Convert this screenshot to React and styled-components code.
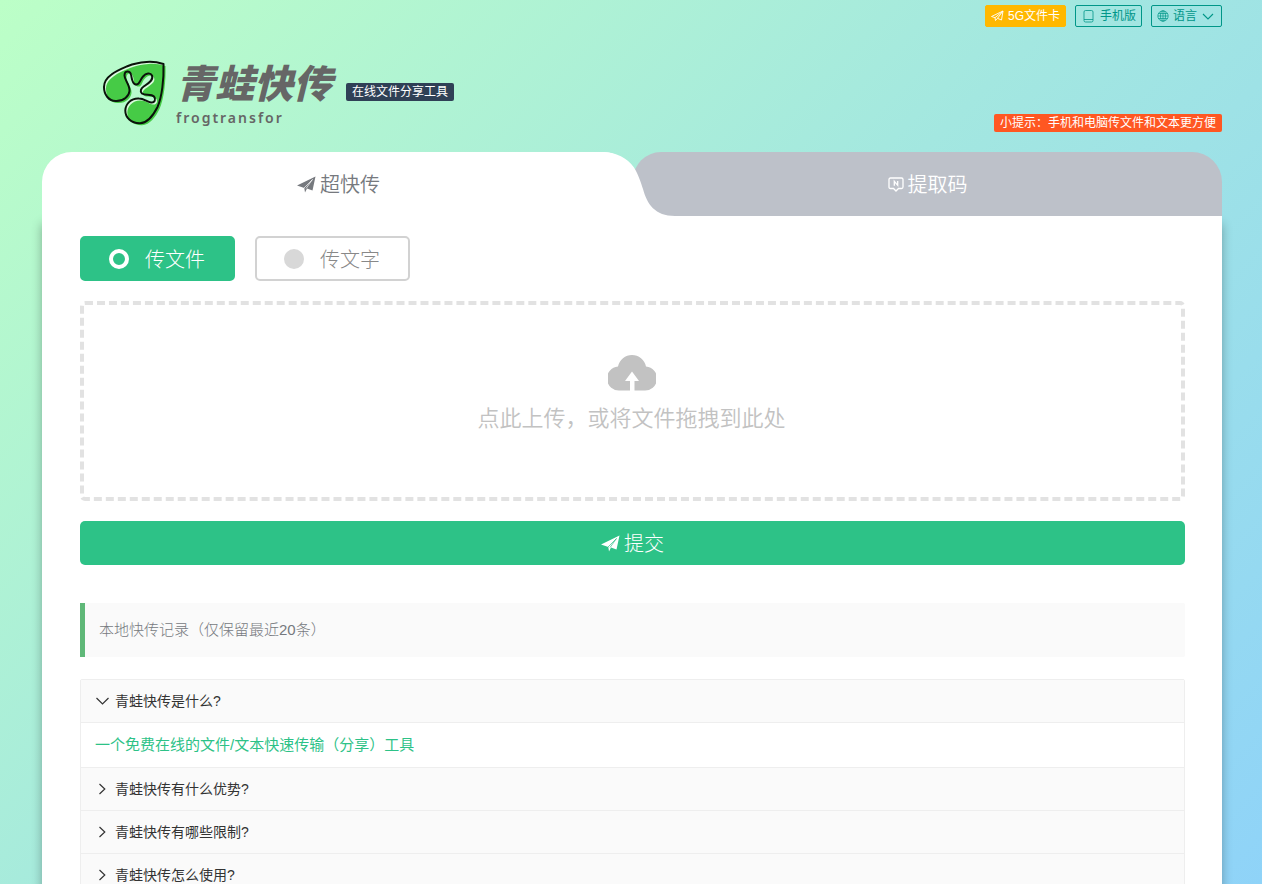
import { useState } from 'react';
import styled, { createGlobalStyle } from 'styled-components';

const GlobalStyle = createGlobalStyle`
  * {
    box-sizing: border-box;
  }

  body {
    margin: 0;
    min-height: 100vh;
    font-family: 'Liberation Sans', 'Noto Sans CJK SC', sans-serif;
    font-size: 14px;
    color: #333;
    background: linear-gradient(135deg, #bcffc7 0%, #a3e7e0 50%, #8fd3f8 100%) fixed;
  }

  button {
    font-family: inherit;
    cursor: pointer;
  }
`;

const StyledPage = styled.div`
  max-width: 1262px;
  margin: 0 auto;
  padding: 0 40px 0 42px;
`;

const StyledTopBar = styled.nav`
  display: flex;
  justify-content: flex-end;
  gap: 9px;
  padding-top: 5px;
`;

const StyledTopLink = styled.a`
  display: inline-flex;
  align-items: center;
  gap: 4px;
  height: 22px;
  padding: 0 5px;
  border: 1px solid ${({ $filled }) => ($filled ? '#ffb800' : '#009688')};
  border-radius: 2px;
  font-size: 12px;
  line-height: 20px;
  text-decoration: none;
  white-space: nowrap;
  color: ${({ $filled }) => ($filled ? '#fff' : '#009688')};
  background: ${({ $filled }) => ($filled ? '#ffb800' : 'transparent')};
`;

const StyledHeader = styled.header`
  display: flex;
  align-items: flex-start;
  justify-content: space-between;
  height: 125px;
  padding: 31px 0 20px 60px;
`;

const StyledBrand = styled.div`
  display: flex;
  gap: 14px;
`;

const StyledLogo = styled.a`
  display: flex;
  gap: 9px;
  color: #666;
  text-decoration: none;
`;

const StyledLogoText = styled.div`
  display: flex;
  flex-direction: column;
  gap: 4px;

  strong {
    font-family: 'Noto Sans CJK SC', sans-serif;
    font-size: 39px;
    font-weight: 900;
    font-style: italic;
    line-height: 46px;
  }

  span {
    font-family: 'Noto Sans', sans-serif;
    font-size: 14px;
    font-weight: 600;
    letter-spacing: 2px;
    line-height: 20px;
  }
`;

const StyledBadge = styled.span`
  height: 18px;
  padding: 0 6px;
  border-radius: 2px;
  font-size: 12px;
  line-height: 18px;
  white-space: nowrap;
  color: #fff;
  background: ${({ $color }) => $color};
`;

const StyledSlogan = styled.div`
  display: flex;
  padding-top: 25px;
`;

const StyledTip = styled.div`
  display: flex;
  align-self: flex-end;
`;

const StyledTabs = styled.div`
  position: relative;
  z-index: 1;
  display: flex;
`;

const StyledTab = styled.button`
  position: relative;
  flex: 1;
  display: flex;
  align-items: center;
  justify-content: center;
  gap: 4px;
  height: 64px;
  padding: 0 0 2px;
  border: 0;
  border-radius: 28px 30px 0 0;
  font-size: 20px;
  font-weight: 350;
  color: #fff;
  background: #bdc1c9;

  &.active {
    z-index: 1;
    padding-left: 2px;
    border-radius: 30px 30px 0 0;
    color: #76797e;
    background: #fff;
  }

  &.active::after {
    content: '';
    position: absolute;
    top: 0;
    right: -42px;
    width: 82px;
    height: 64px;
    background: #fff;
    clip-path: path('M0 0H8C24 0 34 6 41 15.5C46 24 48 31 50 37C54 52 62 64 82 64H0Z');
  }
`;

const StyledPanel = styled.main`
  padding: 20px 37px 40px 38px;
  background: #fff;
  box-shadow: 0 8px 10px rgba(0, 0, 0, 0.3);
`;

const StyledModes = styled.div`
  display: flex;
  gap: 20px;
`;

const StyledMode = styled.label`
  display: flex;
  align-items: center;
  gap: 16px;
  width: 155px;
  height: 45px;
  padding-left: 27px;
  border: 2px solid #d2d2d2;
  border-radius: 5px;
  font-size: 20px;
  font-weight: 300;
  color: #888;
  cursor: pointer;

  input {
    appearance: none;
    width: 20px;
    height: 20px;
    margin: 0;
    border-radius: 50%;
    background: #d8d8d8;
  }

  &.active {
    border-color: #2dc287;
    color: #fff;
    background: #2dc287;
  }

  &.active input {
    border: 4px solid #fff;
    background: transparent;
  }
`;

const StyledUpload = styled.button`
  display: flex;
  flex-direction: column;
  align-items: center;
  gap: 11px;
  width: 100%;
  height: 200px;
  margin-top: 20px;
  padding: 49px 2px 0 0;
  border: 4px dashed #e2e2e2;
  border-radius: 5px;
  font-size: 22px;
  font-weight: 350;
  line-height: 34px;
  color: #c2c2c2;
  background: transparent;
`;

const StyledSubmit = styled.button`
  display: flex;
  align-items: center;
  justify-content: center;
  gap: 4px;
  width: 100%;
  height: 44px;
  margin-top: 20px;
  padding: 0 0 2px;
  border: 0;
  border-radius: 5px;
  font-size: 20px;
  font-weight: 300;
  color: #fff;
  background: #2dc287;
`;

const StyledRecord = styled.p`
  margin: 38px 0 22px;
  padding: 15px 14px;
  border-left: 5px solid #5fb878;
  border-radius: 0 2px 2px 0;
  font-size: 15px;
  font-weight: 300;
  line-height: 24px;
  color: #76797e;
  background: #fafafa;
`;

const StyledFaq = styled.section`
  border: 1px solid #eee;
  border-radius: 2px;
`;

const StyledQuestion = styled.button`
  display: flex;
  align-items: center;
  gap: 6px;
  width: 100%;
  height: 42px;
  padding: 0 14px 2px;
  border: 0;
  font-size: 14px;
  color: #333;
  background: #fafafa;
`;

const StyledFaqItem = styled.div`
  & + & {
    border-top: 1px solid #eee;
  }

  p {
    margin: 0;
    padding: 10px 14px;
    border-top: 1px solid #eee;
    font-size: 15px;
    line-height: 24px;
    color: #2dc287;
  }
`;

const frogPath =
  'M61.5 6C55 4 50 3.500 44.500 4C38 4.500 32 5.500 26 8C19 11 14 13 9.500 16.500C4 20.500 2 24 2 29C2 37 7 43 13.500 43C22 43.500 27 38 27.500 33C28 27 22.500 22 22.500 17.500C22.500 12 28 12.500 29 16.500C30 20 29.500 25 33.500 26.500C38 27.500 37.500 22 41 18.500C44 15 48.500 14.500 50 17.500C52 22 46 25.500 42 28.300C39 30.500 37.500 33 40 35.500C43 38 49 35.500 52 38.500C54.500 41.500 52.500 45 49 44.500C45 44 42 40.500 37 40.500C29 40 23.500 46 23.300 52.500C23.300 59.500 29 65.500 38 65.300C46 65 51.500 57 55.500 49C60 39 62 21 61.500 6Z';

const FrogLogo = () => (
  <svg width="65" height="69" viewBox="0 0 65 69" aria-hidden="true">
    <path d={frogPath} fill="#d9fbdd" />
    <path d={frogPath} fill="#46cb46" transform="translate(2 2)" />
    <path d={frogPath} fill="none" stroke="#0a120a" strokeWidth="2" strokeLinejoin="round" />
  </svg>
);

const PlaneOutlineIcon = () => (
  <svg width="13" height="12" viewBox="0 0 13 12" fill="none" stroke="currentColor" strokeWidth="0.900" strokeLinejoin="round" aria-hidden="true">
    <path d="M0.500 6.500L12 1L10.500 10L6.500 8.300L4.500 10.500L4 7.700Z M4 7.700L12 1L6.500 8.300" />
  </svg>
);

const PhoneIcon = () => (
  <svg width="15" height="14" viewBox="0 0 15 14" fill="none" stroke="currentColor" strokeWidth="0.800" aria-hidden="true">
    <rect x="3" y="1.500" width="9" height="11.500" rx="1.500" />
    <path d="M3 10.500H12" />
  </svg>
);

const GlobeIcon = () => (
  <svg width="12" height="12" viewBox="0 0 12 12" fill="none" stroke="currentColor" strokeWidth="0.700" aria-hidden="true">
    <circle cx="6" cy="6" r="5.200" />
    <ellipse cx="6" cy="6" rx="2.500" ry="5.200" />
    <path d="M6 1V11M1 6H11M1.500 3.500H10.500M1.500 8.500H10.500" />
  </svg>
);

const ChevronIcon = ({ open }) => (
  <svg width="14" height="16" viewBox="0 0 14 16" fill="none" stroke="currentColor" strokeWidth="1.200" aria-hidden="true">
    <path d={open ? 'M1.500 6L7.500 12L13.500 6' : 'M4.500 4L9.800 9L4.500 14'} />
  </svg>
);

const SmallChevronIcon = () => (
  <svg width="15" height="12" viewBox="0 0 15 12" fill="none" stroke="currentColor" strokeWidth="1.100" aria-hidden="true">
    <path d="M2 4L7 9L12 4" />
  </svg>
);

const PlaneIcon = ({ fold = '#fff' }) => (
  <svg width="19" height="19" viewBox="0 0 19 19" fill="currentColor" aria-hidden="true">
    <path d="M0 11.500L18.500 2.500L15.500 16.500L10 14.500L8 18.500L7.300 14Z" />
    <path d="M7 14L15.500 5.500L9 14.500" fill="none" stroke={fold} strokeWidth="0.700" />
  </svg>
);

const CodeIcon = () => (
  <svg width="16" height="18" viewBox="0 0 16 18" fill="none" stroke="currentColor" strokeWidth="1.300" aria-hidden="true">
    <path d="M2.500 4H13.500Q15 4 15 5.500V13Q15 14.500 13.500 14.500H10.500L8 17L5.500 14.500H2.500Q1 14.500 1 13V5.500Q1 4 2.500 4Z" />
    <path d="M6.300 11.700V7.300L9.700 11.300V6.900" />
  </svg>
);

const CloudIcon = () => (
  <svg width="48" height="37" viewBox="0 0 48 37" fill="#c2c2c2" aria-hidden="true">
    <path d="M12 36.500A12 12 0 0 1 10 12.500A14.300 14.300 0 0 1 38 12.500A12 12 0 0 1 36 36.500H26.500V27H31L24 17.500L17 27H22V36.500Z" />
  </svg>
);

const faqs = [
  { question: '青蛙快传是什么?', answer: '一个免费在线的文件/文本快速传输（分享）工具' },
  { question: '青蛙快传有什么优势?' },
  { question: '青蛙快传有哪些限制?' },
  { question: '青蛙快传怎么使用?' },
];

const App = () => {
  const [tab, setTab] = useState('send');
  const [mode, setMode] = useState('file');
  const [openIndex, setOpenIndex] = useState(0);

  return (
    <>
      <GlobalStyle />
      <StyledPage>
        <StyledTopBar>
          <StyledTopLink href="#card" $filled>
            <PlaneOutlineIcon />
            5G文件卡
          </StyledTopLink>
          <StyledTopLink href="#mobile">
            <PhoneIcon />
            手机版
          </StyledTopLink>
          <StyledTopLink href="#language">
            <GlobeIcon />
            语言
            <SmallChevronIcon />
          </StyledTopLink>
        </StyledTopBar>
        <StyledHeader>
          <StyledBrand>
            <StyledLogo href="#home">
              <FrogLogo />
              <StyledLogoText>
                <strong>青蛙快传</strong>
                <span>frogtransfor</span>
              </StyledLogoText>
            </StyledLogo>
            <StyledSlogan>
              <StyledBadge $color="#2f4056">在线文件分享工具</StyledBadge>
            </StyledSlogan>
          </StyledBrand>
          <StyledTip>
            <StyledBadge $color="#ff5722">小提示：手机和电脑传文件和文本更方便</StyledBadge>
          </StyledTip>
        </StyledHeader>
        <StyledTabs>
          <StyledTab className={tab === 'send' ? 'active' : ''} onClick={() => setTab('send')}>
            <PlaneIcon />
            超快传
          </StyledTab>
          <StyledTab className={tab === 'code' ? 'active' : ''} onClick={() => setTab('code')}>
            <CodeIcon />
            提取码
          </StyledTab>
        </StyledTabs>
        <StyledPanel>
          <StyledModes>
            <StyledMode className={mode === 'file' ? 'active' : ''}>
              <input type="radio" name="mode" checked={mode === 'file'} onChange={() => setMode('file')} />
              传文件
            </StyledMode>
            <StyledMode className={mode === 'text' ? 'active' : ''}>
              <input type="radio" name="mode" checked={mode === 'text'} onChange={() => setMode('text')} />
              传文字
            </StyledMode>
          </StyledModes>
          <StyledUpload type="button">
            <CloudIcon />
            点此上传，或将文件拖拽到此处
          </StyledUpload>
          <StyledSubmit type="submit">
            <PlaneIcon fold="#2dc287" />
            提交
          </StyledSubmit>
          <StyledRecord>本地快传记录（仅保留最近20条）</StyledRecord>
          <StyledFaq>
            {faqs.map(({ question, answer }, index) => (
              <StyledFaqItem key={question}>
                <StyledQuestion onClick={() => setOpenIndex(openIndex === index ? -1 : index)}>
                  <ChevronIcon open={openIndex === index} />
                  {question}
                </StyledQuestion>
                {openIndex === index && answer && <p>{answer}</p>}
              </StyledFaqItem>
            ))}
          </StyledFaq>
        </StyledPanel>
      </StyledPage>
    </>
  );
};

export default App;
